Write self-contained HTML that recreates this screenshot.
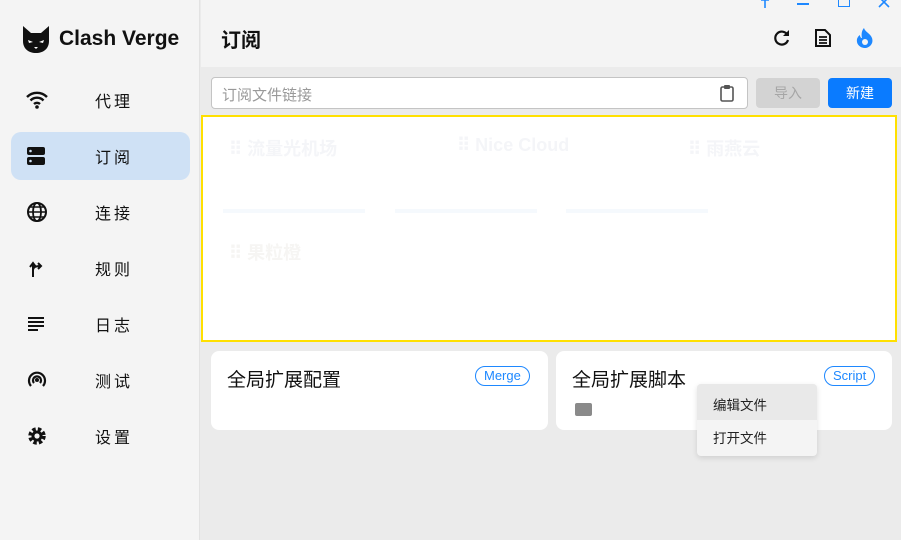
<!DOCTYPE html>
<html><head><meta charset="utf-8"><style>
*{box-sizing:border-box;margin:0;padding:0}
body{width:901px;height:540px;overflow:hidden;font-family:"Liberation Sans","Noto Sans CJK SC",sans-serif;background:#ebebeb;position:relative}
.side{position:absolute;left:0;top:0;width:200px;height:540px;background:#f4f4f4;border-right:1px solid #e2e2e2}
.logo{position:absolute;left:21px;top:25px;display:flex;align-items:center;font-size:21px;font-weight:bold;color:#111}
.nav{position:absolute;left:11px;width:179px;height:48px;border-radius:10px;display:flex;align-items:center}
.nav.act{background:#cfe1f5}
.nav svg{position:absolute;left:15px}
.nav span{position:absolute;left:84px;font-size:16px;letter-spacing:3px;color:#111}
.top{position:absolute;left:201px;top:0;right:0;height:67px;background:#f4f4f4}
.abs{position:absolute}
.card{position:absolute;background:#fff;border-radius:8px}
.tag{position:absolute;border:1px solid #1e88ff;color:#1e88ff;border-radius:10px;font-size:13px;padding:0 8px;height:20px;line-height:18px}
</style></head><body>
<div class="side">
 <div class="logo"><svg width="30" height="28" viewBox="0 0 30 28"><path d="M2 1 L10 8 H20 L28 1 L28 16 C28 24 22 28 15 28 C8 28 2 24 2 16Z" fill="#111"/><path d="M7 15 l5 2 -4 1z M23 15 l-5 2 4 1z" fill="#fff"/><path d="M13 22 h4 l-2 2z" fill="#fff"/></svg><span style="margin-left:8px">Clash Verge</span></div>
 <div class="nav" style="top:76px"><svg width="22" height="18" viewBox="0 0 22 18"><path d="M1 6 A14 14 0 0 1 21 6 M4.5 9.5 A9 9 0 0 1 17.5 9.5 M8 13 A4.5 4.5 0 0 1 14 13" stroke="#111" stroke-width="2.4" fill="none"/><circle cx="11" cy="16" r="1.8" fill="#111"/></svg><span>代理</span></div>
 <div class="nav act" style="top:132px"><svg width="20" height="18" viewBox="0 0 20 18"><rect x="1" y="0" width="18" height="8" rx="2" fill="#111"/><rect x="1" y="10" width="18" height="8" rx="2" fill="#111"/><circle cx="4.5" cy="4" r="1.3" fill="#cfe1f5"/><circle cx="4.5" cy="14" r="1.3" fill="#cfe1f5"/></svg><span>订阅</span></div>
 <div class="nav" style="top:188px"><svg width="22" height="22" viewBox="0 0 22 22"><circle cx="11" cy="11" r="9" stroke="#111" stroke-width="2" fill="none"/><ellipse cx="11" cy="11" rx="4" ry="9" stroke="#111" stroke-width="1.8" fill="none"/><path d="M2 11h18M4 6h14M4 16h14" stroke="#111" stroke-width="1.6"/></svg><span>连接</span></div>
 <div class="nav" style="top:244px"><svg width="20" height="20" viewBox="0 0 20 20"><path d="M7 19V6M4 9l3-4 3 4M7 12c0-3 3-4 7-4M12 5l3 3-3 3" stroke="#111" stroke-width="2" fill="none"/></svg><span>规则</span></div>
 <div class="nav" style="top:300px"><svg width="20" height="18" viewBox="0 0 20 18"><path d="M2 3h16M2 7h16M2 11h16M2 15h10" stroke="#111" stroke-width="2"/></svg><span>日志</span></div>
 <div class="nav" style="top:356px"><svg width="22" height="22" viewBox="0 0 22 22"><path d="M5 17A8 8 0 1 1 17 17M8 14A4 4 0 1 1 14 14" stroke="#111" stroke-width="2.2" fill="none"/><circle cx="11" cy="11" r="2" fill="#111"/></svg><span>测试</span></div>
 <div class="nav" style="top:412px"><svg width="22" height="22" viewBox="0 0 22 22"><circle cx="11" cy="11" r="6.5" fill="none" stroke="#111" stroke-width="4.5" stroke-dasharray="3.2 2"/><circle cx="11" cy="11" r="5.5" fill="#111"/><circle cx="11" cy="11" r="2.6" fill="#f4f4f4"/></svg><span>设置</span></div>
</div>
<div class="top">
 <div class="abs" style="left:20px;top:24px;font-size:20px;font-weight:bold;color:#111">订阅</div>
 <svg class="abs" style="left:556px;top:-4px" width="16" height="12" viewBox="0 0 16 12"><path d="M4 4h8M8 0v12M5 4l1-4h4l1 4" stroke="#1e88ff" stroke-width="1.6" fill="none"/></svg>
 <div class="abs" style="left:596px;top:3px;width:12px;height:1.6px;background:#1e88ff"></div>
 <div class="abs" style="left:637px;top:-4px;width:12px;height:11px;border:1.6px solid #1e88ff"></div>
 <svg class="abs" style="left:677px;top:-4px" width="12" height="12" viewBox="0 0 12 12"><path d="M1 1l10 10M11 1L1 11" stroke="#1e88ff" stroke-width="1.6"/></svg>
 <svg class="abs" style="left:572px;top:29px" width="18" height="18" viewBox="0 0 18 18"><path d="M14.5 6A6.5 6.5 0 1 0 15 11" stroke="#111" stroke-width="2.2" fill="none"/><path d="M16 1v6h-6z" fill="#111"/></svg>
 <svg class="abs" style="left:613px;top:28px" width="18" height="20" viewBox="0 0 18 20"><path d="M2 2h9l5 5v11H2z" stroke="#111" stroke-width="2" fill="none"/><path d="M5 9h8M5 12h8M5 15h8" stroke="#111" stroke-width="1.8"/></svg>
 <svg class="abs" style="left:654px;top:27px" width="20" height="22" viewBox="0 0 20 22"><path d="M9 1c1 4 6 5 8 10 2 6-3 10-7 10S1 18 2 12c1-3 3-4 3-4 0 2 1 3 2 3C6 7 7 3 9 1z" fill="#1e88ff"/><circle cx="10" cy="15" r="3" fill="#f4f4f4"/></svg>
</div>
<div class="abs" style="left:211px;top:77px;width:537px;height:32px;background:#fff;border:1px solid #c4c4c4;border-radius:4px;font-size:15px;color:#999;padding:6px 10px">订阅文件链接
 <svg class="abs" style="left:508px;top:6px" width="14" height="18" viewBox="0 0 14 18"><rect x="1" y="3" width="12" height="14" rx="1.5" stroke="#555" stroke-width="1.6" fill="none"/><rect x="4" y="1" width="6" height="4" rx="1" fill="#555"/></svg></div>
<div class="abs" style="left:756px;top:78px;width:64px;height:30px;background:#d3d3d3;border-radius:4px;color:#a6a6a6;font-size:14px;text-align:center;line-height:30px">导入</div>
<div class="abs" style="left:828px;top:78px;width:64px;height:30px;background:#0a7bff;border-radius:4px;color:#fff;font-size:14px;text-align:center;line-height:30px">新建</div>
<div class="abs" style="left:201px;top:115px;width:696px;height:227px;background:#fff;border:2px solid #ffe000">
 <div class="abs" style="left:26px;top:18px;font-size:18px;font-weight:bold;color:#f4f5f8">⠿ 流量光机场</div>
 <div class="abs" style="left:254px;top:18px;font-size:18px;font-weight:bold;color:#f4f5f8">⠿ Nice Cloud</div>
 <div class="abs" style="left:485px;top:18px;font-size:18px;font-weight:bold;color:#f4f5f8">⠿ 雨燕云</div>
 <div class="abs" style="left:26px;top:122px;font-size:18px;font-weight:bold;color:#f6f5f3">⠿ 果粒橙</div>
 <div class="abs" style="left:20px;top:92px;width:142px;height:4px;background:#f5f9fd"></div>
 <div class="abs" style="left:192px;top:92px;width:142px;height:4px;background:#f5f9fd"></div>
 <div class="abs" style="left:363px;top:92px;width:142px;height:4px;background:#f5f9fd"></div>
</div>
<div class="card" style="left:211px;top:351px;width:337px;height:79px">
 <div class="abs" style="left:16px;top:14px;font-size:19px;color:#111">全局扩展配置</div>
 <div class="tag" style="left:264px;top:15px">Merge</div>
</div>
<div class="card" style="left:556px;top:351px;width:336px;height:79px">
 <div class="abs" style="left:16px;top:14px;font-size:19px;color:#111">全局扩展脚本</div>
 <div class="tag" style="left:268px;top:15px">Script</div>
 <div class="abs" style="left:19px;top:52px;width:17px;height:13px;background:#8a8a8a;border-radius:2px"></div>
</div>
<div class="abs" style="left:697px;top:384px;width:120px;height:72px;background:#f4f4f4;border-radius:4px;box-shadow:0 2px 6px rgba(0,0,0,.12);overflow:hidden;font-size:13.5px;color:#222">
 <div style="height:36px;background:#e9e9e9;padding:10px 16px">编辑文件</div>
 <div style="height:36px;padding:7px 16px">打开文件</div>
</div>
</body></html>
